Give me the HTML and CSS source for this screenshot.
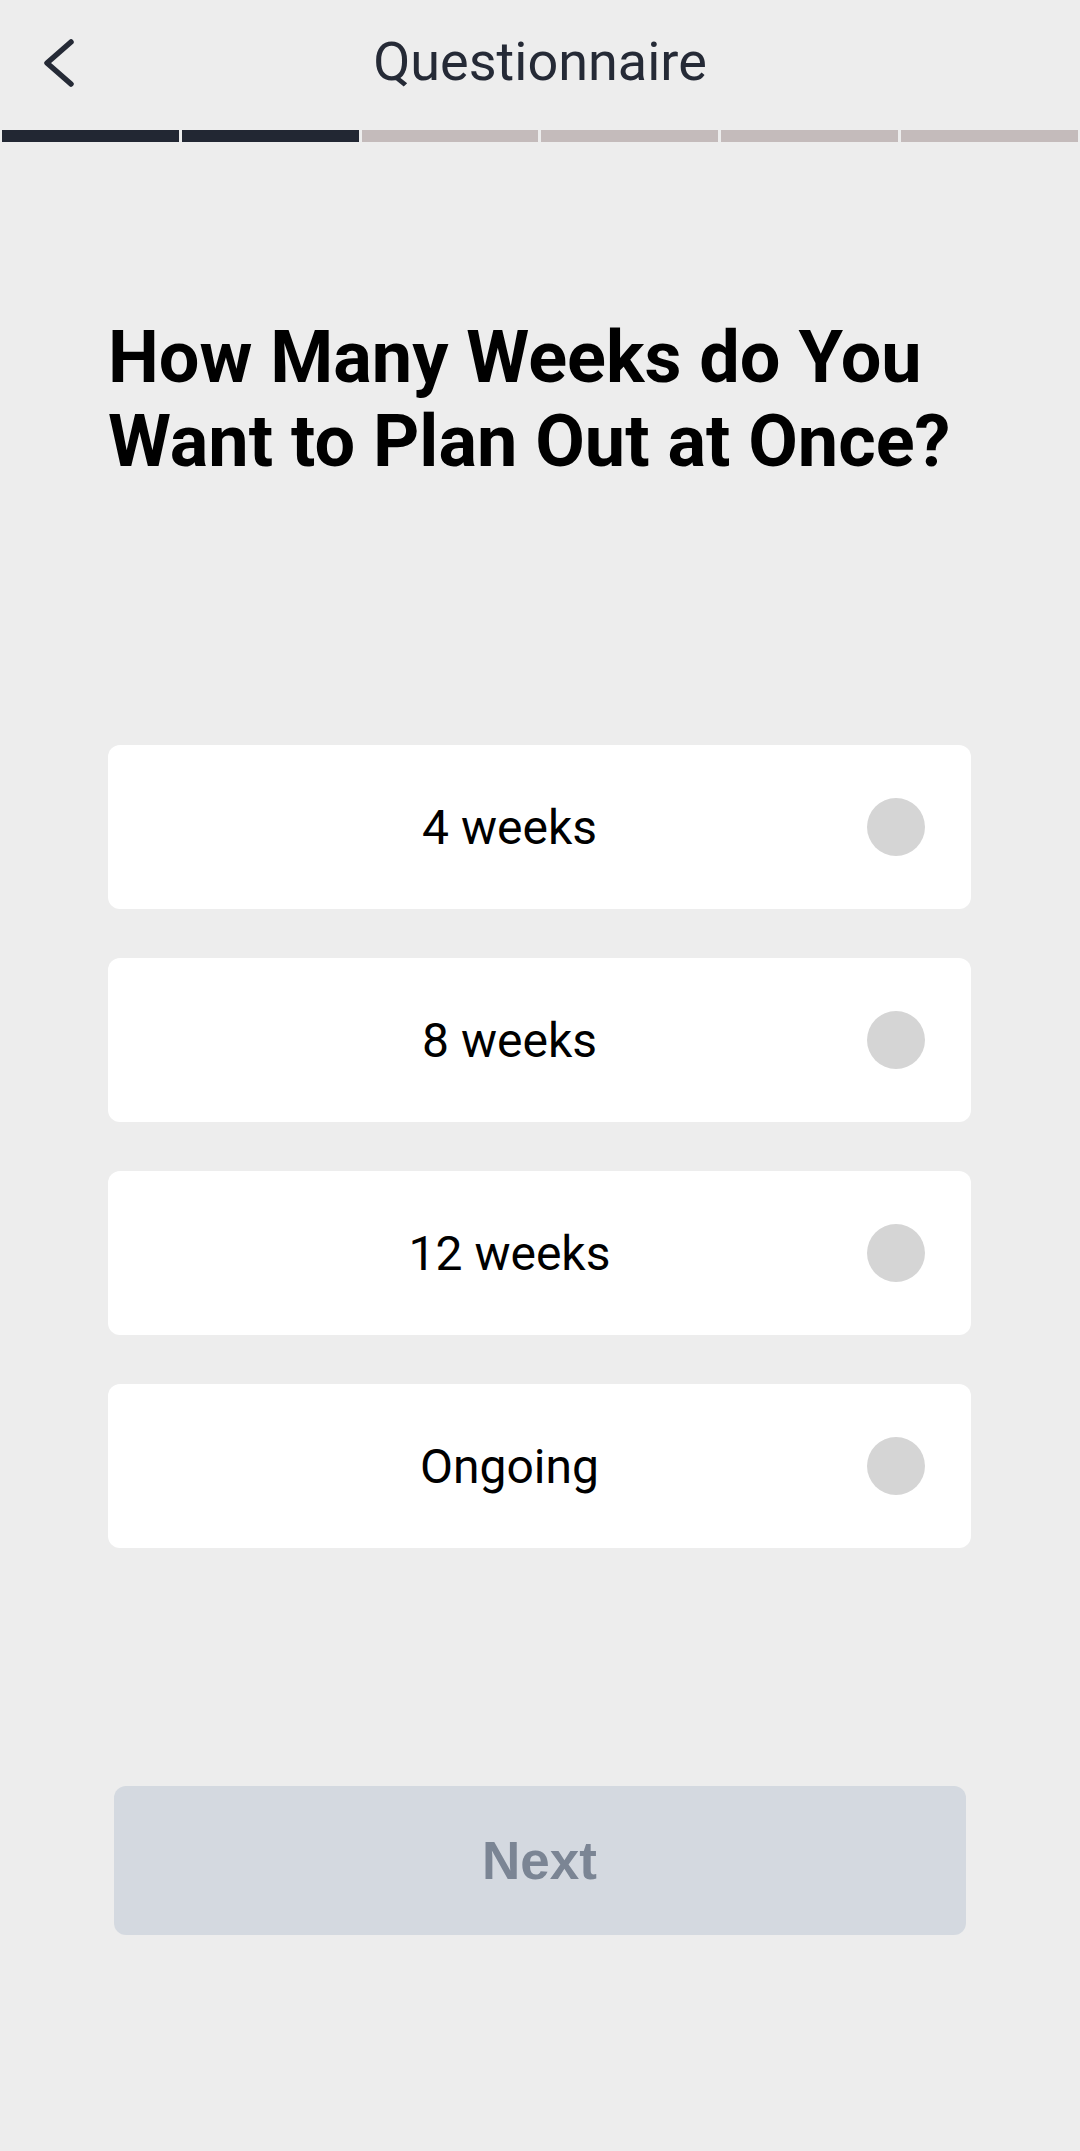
FILE: index.html
```html
<!DOCTYPE html>
<html lang="en">
<head>
    <meta charset="UTF-8">
    <meta name="viewport" content="width=device-width, initial-scale=1.0">
    <title>Questionnaire</title>
    <link rel="stylesheet" href="styles.css">
</head>
<body>
    <header class="top-bar">
        <button class="back-btn" aria-label="Back">
            <svg width="40" height="60" viewBox="0 0 40 60">
                <polyline points="29,12 5,33 29,54" fill="none" stroke="#252a36" stroke-width="5.5" stroke-linecap="round" stroke-linejoin="round"/>
            </svg>
        </button>
        <h1 class="page-title">Questionnaire</h1>
    </header>

    <div class="progress">
        <span class="step done"></span>
        <span class="step done"></span>
        <span class="step"></span>
        <span class="step"></span>
        <span class="step"></span>
        <span class="step"></span>
    </div>

    <main class="content">
        <h2 class="question">How Many Weeks do You Want to Plan Out at Once?</h2>

        <div class="options">
            <label class="option">
                <span class="option-label">4 weeks</span>
                <span class="radio"></span>
            </label>
            <label class="option">
                <span class="option-label">8 weeks</span>
                <span class="radio"></span>
            </label>
            <label class="option">
                <span class="option-label">12 weeks</span>
                <span class="radio"></span>
            </label>
            <label class="option">
                <span class="option-label">Ongoing</span>
                <span class="radio"></span>
            </label>
        </div>

        <button class="next-btn" disabled>Next</button>
    </main>
</body>
</html>
```

FILE: styles.css
```css
body {
    margin: 0;
    height: 2151px;
    background: #ededed;
    font-family: Roboto, 'Noto Sans', sans-serif;
    color: #000;
    overflow: hidden;
}

/* Header */
.top-bar {
    position: relative;
    height: 130px;
    display: flex;
    align-items: center;
    justify-content: center;
}

.back-btn {
    position: absolute;
    left: 42px;
    top: 30px;
    padding: 0;
    border: none;
    background: none;
    width: 40px;
    height: 60px;
}

.back-btn svg {
    display: block;
}

.page-title {
    margin: 0 0 8px;
    font-size: 54px;
    font-weight: 400;
    color: #252a36;
}

/* Progress bar */
.progress {
    display: flex;
    gap: 3px;
    padding: 0 2px;
}

.progress .step {
    flex: 1;
    height: 12px;
    background: #c4bbbb;
}

.progress .step.done {
    background: #222733;
}

/* Question */
.content {
    padding: 174px 109px 0 108px;
}

.question {
    margin: 0;
    font-size: 72px;
    line-height: 84px;
    font-weight: 700;
}

.options {
    margin-top: 261px;
    display: flex;
    flex-direction: column;
    gap: 49px;
}

.option {
    display: flex;
    align-items: center;
    height: 164px;
    padding: 0 46px 0 44px;
    background: #fff;
    border-radius: 12px;
}

.option-label {
    flex: 1;
    text-align: center;
    font-size: 48px;
}

.radio {
    width: 58px;
    height: 58px;
    border-radius: 50%;
    background: #d5d5d5;
}

.next-btn {
    display: block;
    width: 852px;
    height: 149px;
    margin: 238px auto 0;
    border: none;
    border-radius: 12px;
    background: #d4d9e0;
    color: #7b8594;
    font-family: 'Liberation Sans', Arial, sans-serif;
    font-size: 53px;
    font-weight: 700;
}
```
